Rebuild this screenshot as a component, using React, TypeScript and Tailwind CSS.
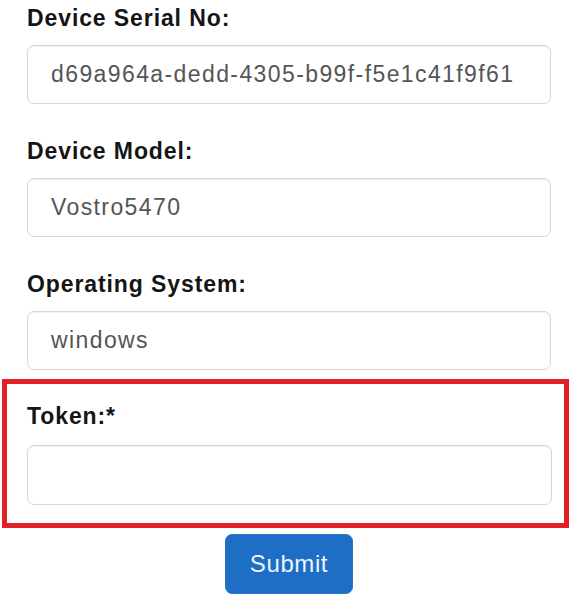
const fields = [
  { label: 'Device Serial No:', value: 'd69a964a-dedd-4305-b99f-f5e1c41f9f61' },
  { label: 'Device Model:', value: 'Vostro5470' },
  { label: 'Operating System:', value: 'windows' },
];

function Field({ label, value }: { label: string; value: string }) {
  return (
    <div className="flex flex-col">
      <label className="text-[23px] leading-6 font-bold tracking-[0.9px] text-[#151515]">
        {label}
      </label>
      <div className="mt-[15px] flex h-[59px] items-center rounded-[7px] border border-[#d6d6d6] bg-white pl-[23px] text-[23px] tracking-[1.4px] text-[#555] shadow-[inset_0_1px_1px_rgba(0,0,0,0.06)]">
        {value}
      </div>
    </div>
  );
}

export default function App() {
  return (
    <div
      className="min-h-screen bg-white pt-[6px]"
      style={{ fontFamily: '"Liberation Sans", Arial, sans-serif' }}
    >
      <div className="flex flex-col gap-[35px] pl-[27px] pr-[20px]">
        {fields.map((f) => (
          <Field key={f.label} label={f.label} value={f.value} />
        ))}
      </div>

      <div className="mx-[2px] mt-[9px] border-[5px] border-[#e31f26] pt-[20px] pb-[18px] pl-[20px] pr-[12px]">
        <div className="flex flex-col">
          <label className="text-[23px] leading-6 font-bold tracking-[0.9px] text-[#151515]">
            Token:*
          </label>
          <input
            type="text"
            className="mt-[17px] h-[60px] rounded-[7px] border border-[#d6d6d6] bg-white pl-[23px] text-[23px] text-[#555] shadow-[inset_0_1px_1px_rgba(0,0,0,0.06)] outline-none"
          />
        </div>
      </div>

      <div className="mt-[6px] flex justify-center pl-[27px] pr-[20px]">
        <button
          type="submit"
          className="h-[60px] w-[128px] rounded-[7px] border border-[#2a78cc] bg-[#1d6ec4] text-[24px] tracking-[0.6px] text-[#eef4ff]"
        >
          Submit
        </button>
      </div>
    </div>
  );
}
